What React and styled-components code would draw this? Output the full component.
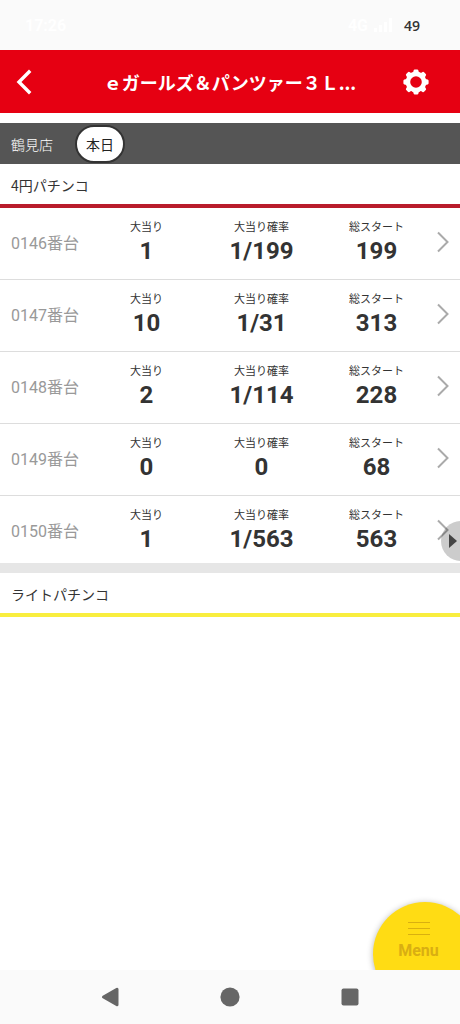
import styled, { createGlobalStyle } from 'styled-components';

const GlobalStyle = createGlobalStyle`
    * {
        box-sizing: border-box;
    }
    body {
        margin: 0;
        background: #fff;
        color: #333;
        font-family: 'Noto Sans CJK JP', sans-serif;
    }
`;

const Screen = styled.div`
    min-height: 100vh;
    display: flex;
    flex-direction: column;
`;

const StatusBar = styled.div`
    height: 50px;
    padding: 0 36px 0 25px;
    display: flex;
    align-items: center;
    gap: 6px;
    background: #fafafa;
    color: #fff;
    font: 700 16px Roboto, sans-serif;
`;

const Clock = styled.span`
    flex: 1;
`;

const Battery = styled.span`
    width: 24px;
    text-align: center;
    color: #333;
    font: 600 14px 'Open Sans', sans-serif;
`;

const Header = styled.header`
    height: 63px;
    padding: 0 24px 0 4px;
    display: flex;
    align-items: center;
    background: #e60012;
    color: #fff;
`;

const IconButton = styled.button`
    width: 40px;
    height: 40px;
    padding: 0;
    border: 0;
    background: none;
    color: inherit;
    display: flex;
    align-items: center;
    justify-content: center;
`;

const Title = styled.h1`
    flex: 1;
    margin: 0;
    padding-left: 20px;
    font-size: 18px;
    line-height: 28px;
    font-weight: 700;
    text-align: center;
    white-space: nowrap;
`;

const Main = styled.main`
    flex: 1;
    position: relative;
    overflow: hidden;
    padding-top: 10px;
`;

const ShopBar = styled.div`
    height: 41px;
    padding: 0 11px;
    display: flex;
    align-items: center;
    gap: 22px;
    background: #555;
    color: #fff;
    font-size: 14px;
    font-weight: 300;
`;

const DayButton = styled.button`
    width: 50px;
    height: 38px;
    padding: 0;
    border: 2px solid #333;
    border-radius: 19px;
    background: #fff;
    color: #222;
    font: 400 14px 'Noto Sans CJK JP', sans-serif;
`;

const SectionTitle = styled.h2`
    height: 44px;
    margin: 0;
    padding: 0 11px;
    border-bottom: 4px solid ${(props) => props.$color};
    font-size: 14px;
    line-height: 42px;
    font-weight: 400;
`;

const MachineList = styled.ul`
    margin: 0;
    padding: 0;
    list-style: none;
    border-bottom: 10px solid #e6e6e6;
`;

const MachineItem = styled.li`
    height: 72px;
    border-bottom: 1px solid #ddd;

    &:last-child {
        height: 67px;
        border-bottom: 0;
    }
`;

const MachineLink = styled.a`
    display: grid;
    grid-template-columns: 78px 1fr 1fr 1fr 26px;
    padding: 9px 0 0 11px;
    color: inherit;
    text-decoration: none;
`;

const MachineName = styled.span`
    padding-top: 15px;
    color: #999;
    font: 400 16px/24px Roboto, 'Noto Sans CJK JP', sans-serif;
    white-space: nowrap;
`;

const Stat = styled.span`
    display: flex;
    flex-direction: column;
    align-items: center;
`;

const StatLabel = styled.span`
    font-size: 11px;
    line-height: 18px;
`;

const StatValue = styled.strong`
    font: 700 24px/32px Roboto, sans-serif;
`;

const Arrow = styled.span`
    padding: 14px 0 0 2px;
    line-height: 0;
`;

const SideHandle = styled.button`
    position: absolute;
    top: 408px;
    right: -21px;
    width: 40px;
    height: 40px;
    padding: 0 0 0 8px;
    border: 0;
    border-radius: 50%;
    background: rgba(0, 0, 0, 0.2);
    display: flex;
    align-items: center;
`;

const MenuButton = styled.button`
    position: absolute;
    right: -17px;
    bottom: -36px;
    width: 104px;
    height: 104px;
    padding: 19px 13px 0 0;
    border: 0;
    border-radius: 50%;
    background: #ffdc14;
    box-shadow: 0 1px 6px rgba(0, 0, 0, 0.3);
    color: #d9ae12;
    display: flex;
    flex-direction: column;
    align-items: center;
    gap: 5px;
    font: 700 16px/20px Roboto, sans-serif;
`;

const NavBar = styled.nav`
    height: 54px;
    display: flex;
    align-items: center;
    justify-content: center;
    gap: 80px;
    background: #fafafa;
`;

const machines = [
    { no: '0146', hits: '1', rate: '1/199', starts: '199' },
    { no: '0147', hits: '10', rate: '1/31', starts: '313' },
    { no: '0148', hits: '2', rate: '1/114', starts: '228' },
    { no: '0149', hits: '0', rate: '0', starts: '68' },
    { no: '0150', hits: '1', rate: '1/563', starts: '563' },
];

const teeth = [0, 45, 90, 135, 180, 225, 270, 315];

const GearIcon = () => (
    <svg width="26" height="26" viewBox="0 0 26 26" aria-hidden="true">
        <circle cx="13" cy="13" r="8.1" fill="none" stroke="#fff" strokeWidth="4.6" />
        {teeth.map((angle) => (
            <path
                key={angle}
                d="M9.8 4.4 L10.6 1.4 Q10.8 0.4 11.8 0.4 H14.2 Q15.2 0.4 15.4 1.4 L16.2 4.4Z"
                fill="#fff"
                transform={`rotate(${angle} 13 13)`}
            />
        ))}
    </svg>
);

const MachineStat = ({ label, value }) => (
    <Stat>
        <StatLabel>{label}</StatLabel>
        <StatValue>{value}</StatValue>
    </Stat>
);

const App = () => {
    return (
        <Screen>
            <GlobalStyle />
            <StatusBar>
                <Clock>17:26</Clock>
                <span>4G</span>
                <svg width="20" height="14" viewBox="0 0 20 14" fill="#fff" aria-hidden="true">
                    <path d="M0 10h3v4H0zM5 7h3v7H5zM10 4h3v10h-3zM15 0h3v14h-3z" />
                </svg>
                <Battery>49</Battery>
            </StatusBar>
            <Header>
                <IconButton aria-label="戻る">
                    <svg width="16" height="26" viewBox="0 0 16 26" fill="none" stroke="#fff" strokeWidth="3.4" aria-hidden="true">
                        <path d="M14.2 1.8 L3 13 L14.2 24.2" />
                    </svg>
                </IconButton>
                <Title>ｅガールズ＆パンツァー３Ｌ...</Title>
                <IconButton aria-label="設定">
                    <GearIcon />
                </IconButton>
            </Header>
            <Main>
                <ShopBar>
                    <span>鶴見店</span>
                    <DayButton>本日</DayButton>
                </ShopBar>
                <SectionTitle $color="#b91c2b">4円パチンコ</SectionTitle>
                <MachineList>
                    {machines.map((machine) => (
                        <MachineItem key={machine.no}>
                            <MachineLink href={`#${machine.no}`}>
                                <MachineName>{machine.no}番台</MachineName>
                                <MachineStat label="大当り" value={machine.hits} />
                                <MachineStat label="大当り確率" value={machine.rate} />
                                <MachineStat label="総スタート" value={machine.starts} />
                                <Arrow>
                                    <svg width="14" height="22" viewBox="0 0 14 22" fill="none" stroke="#aaa" strokeWidth="2" aria-hidden="true">
                                        <path d="M2 1.5 L11.5 11 L2 20.5" />
                                    </svg>
                                </Arrow>
                            </MachineLink>
                        </MachineItem>
                    ))}
                </MachineList>
                <SectionTitle $color="#f9ee3e">ライトパチンコ</SectionTitle>
                <SideHandle aria-label="開く">
                    <svg width="8" height="14" viewBox="0 0 8 14" fill="#444" aria-hidden="true">
                        <path d="M0 0 L8 7 L0 14Z" />
                    </svg>
                </SideHandle>
                <MenuButton>
                    <svg width="22" height="15" viewBox="0 0 22 15" stroke="#d9b010" strokeWidth="1" aria-hidden="true">
                        <path d="M0 1.5h22M0 7.5h22M0 13.5h22" />
                    </svg>
                    Menu
                </MenuButton>
            </Main>
            <NavBar>
                <IconButton aria-label="戻る">
                    <svg width="20" height="20" viewBox="0 0 20 20" fill="#666" stroke="#666" strokeWidth="3" strokeLinejoin="round" aria-hidden="true">
                        <path d="M3.5 10 L17 2.2 V17.8Z" />
                    </svg>
                </IconButton>
                <IconButton aria-label="ホーム">
                    <svg width="20" height="20" viewBox="0 0 20 20" fill="#666" aria-hidden="true">
                        <circle cx="10" cy="10" r="9.6" />
                    </svg>
                </IconButton>
                <IconButton aria-label="履歴">
                    <svg width="20" height="20" viewBox="0 0 20 20" fill="#666" aria-hidden="true">
                        <rect x="1.5" y="1.5" width="17" height="17" rx="2" />
                    </svg>
                </IconButton>
            </NavBar>
        </Screen>
    );
};

export default App;
